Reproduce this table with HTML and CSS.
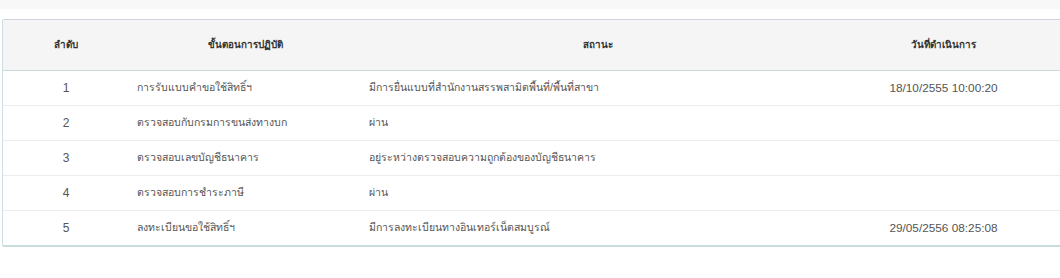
FILE: index.html
```html
<!DOCTYPE html>
<html lang="th">
<head>
<meta charset="utf-8">
<link rel="stylesheet" href="styles.css">
</head>
<body>
<div class="topband"></div>
<div class="panel">
  <table class="steps">
    <colgroup>
      <col class="c1"><col class="c2"><col class="c3"><col class="c4">
    </colgroup>
    <thead>
      <tr>
        <th>ลำดับ</th>
        <th>ขั้นตอนการปฏิบัติ</th>
        <th>สถานะ</th>
        <th class="date">วันที่ดำเนินการ</th>
      </tr>
    </thead>
    <tbody>
      <tr><td class="num">1</td><td>การรับแบบคำขอใช้สิทธิ์ฯ</td><td>มีการยื่นแบบที่สำนักงานสรรพสามิตพื้นที่/พื้นที่สาขา</td><td class="date">18/10/2555 10:00:20</td></tr>
      <tr><td class="num">2</td><td>ตรวจสอบกับกรมการขนส่งทางบก</td><td>ผ่าน</td><td class="date"></td></tr>
      <tr><td class="num">3</td><td>ตรวจสอบเลขบัญชีธนาคาร</td><td>อยู่ระหว่างตรวจสอบความถูกต้องของบัญชีธนาคาร</td><td class="date"></td></tr>
      <tr><td class="num">4</td><td>ตรวจสอบการชำระภาษี</td><td>ผ่าน</td><td class="date"></td></tr>
      <tr><td class="num">5</td><td>ลงทะเบียนขอใช้สิทธิ์ฯ</td><td>มีการลงทะเบียนทางอินเทอร์เน็ตสมบูรณ์</td><td class="date">29/05/2556 08:25:08</td></tr>
    </tbody>
  </table>
</div>
</body>
</html>
```
FILE: styles.css
```css
html, body {
  margin: 0;
  padding: 0;
  background: #ffffff;
  overflow: hidden;
}
body {
  font-family: Tahoma, "Liberation Sans", "Noto Sans", sans-serif;
  color: #555555;
  font-size: 10.5px;
}
.topband {
  height: 9px;
  background: #f8f8f8;
}
.panel {
  margin: 10px 0 0 2px;
  width: 1075px;
  border: 1px solid #cfdfe1;
  border-top-color: #d3d3de;
  border-bottom: 2px solid #c7dcdb;
  border-radius: 2px 0 0 2px;
  background: #ffffff;
}
.steps {
  width: 100%;
  border-collapse: collapse;
  table-layout: fixed;
}
.c1 { width: 126px; }
.c2 { width: 232px; }
.c3 { width: 474px; }
.c4 { width: auto; }
.steps th {
  height: 50px;
  padding: 0 8px;
  background: #f5f5f5;
  color: #333333;
  font-weight: bold;
  font-size: 9.8px;
  text-align: center;
  border-bottom: 1px solid #c9dcdc;
  box-sizing: border-box;
}
.steps td {
  height: 34px;
  padding: 0 8px;
  border-top: 1px solid #ececec;
  vertical-align: middle;
}
.steps tbody tr:first-child td {
  border-top: none;
}
.steps td.num {
  text-align: center;
  font-family: "Liberation Sans", Arial, sans-serif;
  font-size: 12px;
}
.steps .date {
  text-align: center;
  padding-right: 34px;
}
.steps td.date {
  font-family: "Liberation Sans", Arial, sans-serif;
  font-size: 11.8px;
}
```
